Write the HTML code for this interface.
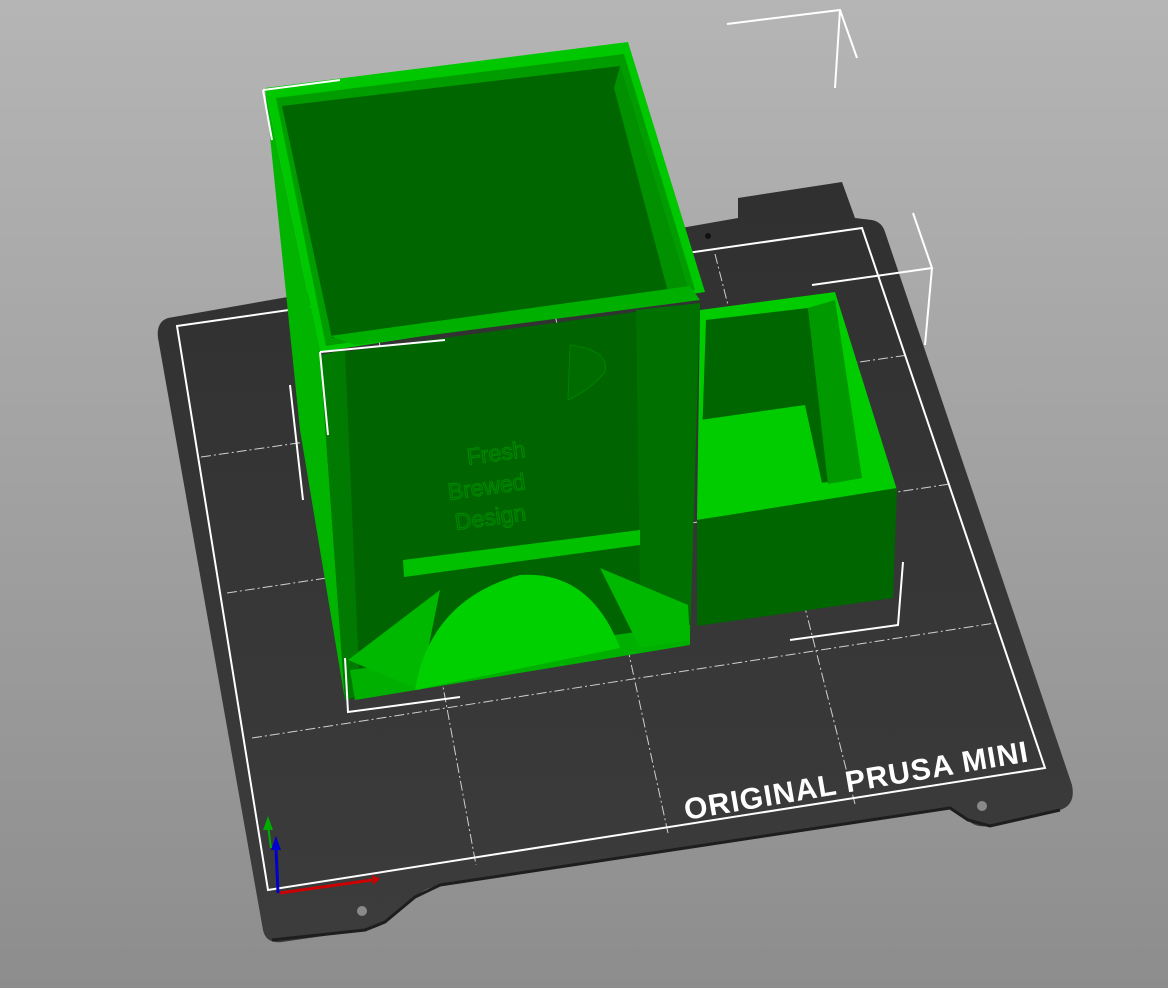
<!DOCTYPE html>
<html><head><meta charset="utf-8"><style>
html,body{margin:0;padding:0;}
body{width:1168px;height:988px;overflow:hidden;background:linear-gradient(#b5b5b5,#8d8d8d);}
svg{display:block}
</style></head><body>
<svg width="1168" height="988" viewBox="0 0 1168 988" xmlns="http://www.w3.org/2000/svg">
<defs>
<linearGradient id="bed" x1="0" y1="0" x2="0" y2="1"><stop offset="0" stop-color="#303030"/><stop offset="1" stop-color="#3c3c3c"/></linearGradient>
</defs>
<path d="M168,318 L738,218 L738,198 L842,182 L855,218 L872,220 Q882,222 885,232 L1072,785 Q1076,805 1060,810 L990,826 Q975,828 968,820 L950,808 L440,885 Q425,888 415,897 L385,922 Q378,928 365,930 L282,942 Q266,944 263,930 L158,338 Q156,322 168,318 Z" fill="url(#bed)"/>
<path d="M272,940 L365,930 L385,922 L415,897 L440,885 L950,808 L968,820 L990,826 L1060,810" stroke="#1e1e1e" stroke-width="3" fill="none"/>
<circle cx="982" cy="806" r="5" fill="#8a8a8a"/>
<circle cx="362" cy="911" r="5" fill="#8a8a8a"/>
<circle cx="708" cy="236" r="3" fill="#111"/>
<g stroke="#cfcfcf" stroke-width="1" stroke-dasharray="10,3,2,3" fill="none">
<line x1="201" y1="457" x2="908" y2="355"/>
<line x1="227" y1="593" x2="950" y2="484"/>
<line x1="252" y1="738" x2="995" y2="623"/>
<line x1="372" y1="303" x2="476" y2="865"/>
<line x1="547" y1="278" x2="668" y2="833"/>
<line x1="715" y1="254" x2="855" y2="804"/>
</g>
<path d="M177,326 L862,228 L1045,768 L268,890 Z" stroke="#fff" stroke-width="2" fill="none"/>
<text x="0" y="0" transform="translate(686,820) rotate(-9.7)" font-family="Liberation Sans, sans-serif" font-weight="bold" font-size="30" letter-spacing="1" fill="#fff">ORIGINAL PRUSA MINI</text>
<!-- right box -->
<path d="M700,310 L835,292 L897,490 L697,520 Z" fill="#00cc00"/>
<path d="M706,320 L808,308 L828,482 L700,498 Z" fill="#006600"/>
<path d="M700,420 L805,405 L822,483 L700,500 Z" fill="#00cc00"/>
<path d="M808,308 L835,300 L862,478 L828,484 Z" fill="#009900"/>
<path d="M697,520 L897,488 L893,598 L697,626 Z" fill="#006600"/>
<!-- tower -->
<path d="M265,88 L320,352 L345,700 L300,430 Z" fill="#00b400"/>
<path d="M265,88 L628,42 L705,292 L320,352 Z" fill="#00c800"/>
<path d="M276,98 L624,54 L695,290 L326,346 Z" fill="#009c00"/>
<path d="M282,106 L620,66 L688,290 L332,338 Z" fill="#006600"/>
<path d="M620,66 L688,290 L668,292 L614,88 Z" fill="#009000"/>
<path d="M330,336 L690,286 L700,300 L355,345 Z" fill="#00b000"/>
<path d="M320,355 L700,303 L690,640 L345,700 Z" fill="#006400"/>
<path d="M636,310 L700,303 L690,640 L640,600 Z" fill="#007000"/>
<path d="M320,355 L345,350 L360,695 L345,700 Z" fill="#007a00"/>
<path d="M403,560 L640,530 L640,545 L404,577 Z" fill="#00c000"/>
<path d="M350,670 L690,625 L690,645 L355,700 Z" fill="#00b000"/>
<path d="M348,660 L440,590 L420,690 Z" fill="#00b800"/>
<path d="M600,568 L688,605 L690,640 L640,648 Z" fill="#00b800"/>
<path d="M415,690 Q430,600 520,575 Q590,570 620,648 Z" fill="#00d000"/>
<path d="M570,345 Q610,350 605,372 Q590,390 568,400 Z" fill="#006c00" stroke="#008000"/>
<g font-family="Liberation Sans, sans-serif" font-size="23" fill="#006800" stroke="#008a00" stroke-width="1">
<text transform="translate(468,465) rotate(-8)">Fresh</text>
<text transform="translate(449,500) rotate(-8)">Brewed</text>
<text transform="translate(456,530) rotate(-8)">Design</text>
</g>
<g stroke="#fff" stroke-width="2" fill="none">
<path d="M727,24 L840,10 L857,58 M840,10 L835,88"/>
<path d="M263,90 L340,80 M263,90 L272,140"/>
<path d="M913,213 L932,268 L812,285 M932,268 L925,345"/>
<path d="M320,352 L445,340 M320,352 L328,435 M290,385 L303,500"/>
<path d="M903,562 L898,625 L790,640 M345,658 L348,712 L460,697"/>
</g>
<line x1="280" y1="893" x2="372" y2="880" stroke="#c00" stroke-width="3"/>
<polygon points="372,875 380,879 373,885" fill="#c00"/>
<line x1="278" y1="893" x2="276" y2="848" stroke="#00c" stroke-width="3"/>
<polygon points="271,850 276,836 281,850" fill="#00c"/>
<line x1="271" y1="848" x2="268" y2="826" stroke="#0a0" stroke-width="2"/>
<polygon points="263,830 268,816 273,830" fill="#0a0"/>
</svg>
</body></html>
